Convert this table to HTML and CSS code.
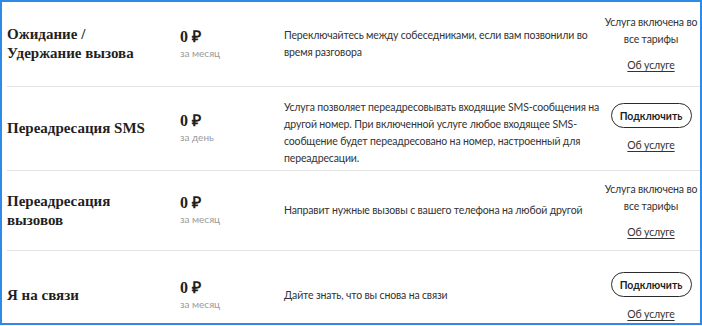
FILE: index.html
```html
<!DOCTYPE html>
<html lang="ru">
<head>
<meta charset="utf-8">
<link rel="stylesheet" href="styles.css">
</head>
<body>
<div class="frame">
  <div class="row r1">
    <div class="title">Ожидание /<br>Удержание вызова</div>
    <div class="price"><div class="sum">0 ₽</div><div class="per">за месяц</div></div>
    <div class="desc">Переключайтесь между собеседниками, если вам позвонили во время разговора</div>
    <div class="action"><div class="note">Услуга включена во<br>все тарифы</div><a class="more" href="#">Об услуге</a></div>
  </div>
  <div class="row r2">
    <div class="title">Переадресация SMS</div>
    <div class="price"><div class="sum">0 ₽</div><div class="per">за день</div></div>
    <div class="desc">Услуга позволяет переадресовывать входящие SMS-сообщения на другой номер. При включенной услуге любое входящее SMS-сообщение будет переадресовано на номер, настроенный для переадресации.</div>
    <div class="action"><button class="btn">Подключить</button><a class="more" href="#">Об услуге</a></div>
  </div>
  <div class="row r3">
    <div class="title">Переадресация<br>вызовов</div>
    <div class="price"><div class="sum">0 ₽</div><div class="per">за месяц</div></div>
    <div class="desc">Направит нужные вызовы с вашего телефона на любой другой</div>
    <div class="action"><div class="note">Услуга включена во<br>все тарифы</div><a class="more" href="#">Об услуге</a></div>
  </div>
  <div class="row r4">
    <div class="title">Я на связи</div>
    <div class="price"><div class="sum">0 ₽</div><div class="per">за месяц</div></div>
    <div class="desc">Дайте знать, что вы снова на связи</div>
    <div class="action"><button class="btn">Подключить</button><a class="more" href="#">Об услуге</a></div>
  </div>
</div>
</body>
</html>
```
FILE: styles.css
```css
html, body {
  margin: 0;
  padding: 0;
  background: #fff;
}
.frame {
  width: 702px;
  height: 325px;
  box-sizing: border-box;
  border: 2px solid #2d8ae6;
  overflow: hidden;
  background: #fff;
  font-family: "Lato", "Open Sans", sans-serif;
  color: #2b2b2b;
}
.row {
  display: grid;
  grid-template-columns: 173px 104px 318px 1fr;
  align-items: center;
  margin-left: 5px;
  border-bottom: 1px solid #e3e3e3;
  box-sizing: border-box;
}
.r1 { height: 85px; }
.r2 { height: 84px; }
.r3 { height: 80px; }
.r4 { height: 90px; }
.title {
  font-family: "Liberation Serif", serif;
  font-weight: bold;
  font-size: 15px;
  line-height: 19px;
  color: #1f1f1f;
}
.sum {
  font-family: "Liberation Serif", serif;
  font-weight: bold;
  font-size: 16px;
  line-height: 16px;
  color: #1f1f1f;
}
.per {
  font-size: 10px;
  line-height: 14px;
  color: #9a9a9a;
  margin-top: 1px;
}
.desc {
  font-size: 10.5px;
  letter-spacing: -0.15px;
  line-height: 17px;
  color: #333;
}
.r2 .desc { margin-top: 8px; }
.action {
  display: flex;
  flex-direction: column;
  align-items: center;
  text-align: center;
  font-size: 10.5px;
  letter-spacing: -0.15px;
  line-height: 17px;
  color: #333;
}
.r4 .action { margin-top: 4px; }
.note { margin-bottom: 9px; }
.more {
  color: #333;
  text-decoration: underline;
  text-underline-offset: 2px;
}
.btn {
  font-family: "Lato", "Open Sans", sans-serif;
  font-weight: bold;
  font-size: 10.5px;
  color: #1f1f1f;
  background: #fff;
  border: 1.5px solid #2b2b2b;
  border-radius: 13px;
  width: 81px;
  height: 25px;
  padding: 0;
  margin-bottom: 9px;
}
```
